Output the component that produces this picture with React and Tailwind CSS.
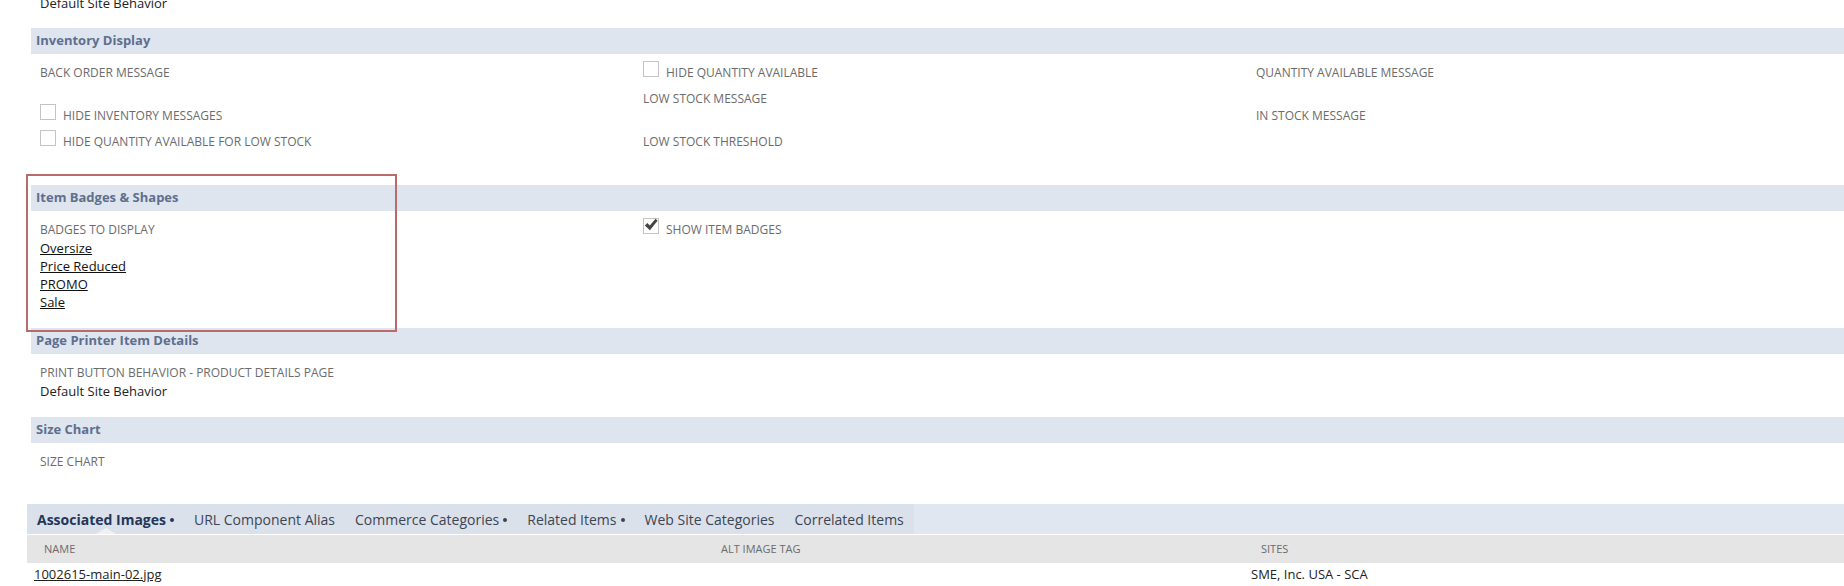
import React from 'react';

// Item record, Web Store subtab (lower part)

const Label = ({ children }) => (
  <div className="text-[12px] leading-[18px] text-[#6b6b6b] uppercase">{children}</div>
);

const TextField = ({ label, value }) => (
  <div className="pb-[7px]">
    <Label>{label}</Label>
    <div className="h-[18px] text-[13px] leading-[18px] text-[#222]">{value}</div>
  </div>
);

const CheckBox = ({ checked }) => (
  <span className="-mt-[3px] flex h-[16px] w-[16px] shrink-0 items-center justify-center border border-[#c4c4c4] bg-white">
    {checked && (
      <svg width="14" height="14" viewBox="0 0 14 14" className="-mt-[2px] -ml-[1px]">
        <path d="M0.8 7.4 L3.4 5 L5.8 7.6 L11.6 0.8 L13.6 2.8 L5.9 12.2 Z" fill="#454545" />
      </svg>
    )}
  </span>
);

const CheckField = ({ label, checked }) => (
  <div className="flex h-[26px] items-start">
    <CheckBox checked={checked} />
    <span className="ml-[7px] text-[12px] leading-[18px] text-[#6b6b6b] uppercase">{label}</span>
  </div>
);

const Section = ({ title, pb = 'pb-[8px]', children }) => (
  <div>
    <div className="ml-[31px] flex h-[26px] items-center bg-[#dfe5ef] pl-[5px] text-[13px] font-bold text-[#5e6f8d]">
      {title}
    </div>
    <div className={'ml-[31px] flex pt-[10px] pl-[9px] ' + pb}>{children}</div>
  </div>
);

const tabs = [
  { name: 'Associated Images', dot: true, active: true },
  { name: 'URL Component Alias' },
  { name: 'Commerce Categories', dot: true },
  { name: 'Related Items', dot: true },
  { name: 'Web Site Categories' },
  { name: 'Correlated Items' },
];

const badges = ['Oversize', 'Price Reduced', 'PROMO', 'Sale'];

export default function App() {
  return (
    <div className="relative h-[586px] w-[1844px] overflow-hidden bg-white" style={{ fontFamily: '"Open Sans", sans-serif' }}>
      {/* tail of the previous section */}
      <div className="-mt-[6px] pb-[16px] pl-[40px] text-[13px] leading-[18px] text-[#222]">Default Site Behavior</div>

      <Section title="Inventory Display" pb="pb-[9px]">
        <div className="w-[603px]">
          <TextField label="Back Order Message" />
          <CheckField label="Hide Inventory Messages" />
          <CheckField label="Hide Quantity Available for Low Stock" />
        </div>
        <div className="w-[613px]">
          <CheckField label="Hide Quantity Available" />
          <TextField label="Low Stock Message" />
          <TextField label="Low Stock Threshold" />
        </div>
        <div className="flex-1">
          <TextField label="Quantity Available Message" />
          <TextField label="In Stock Message" />
        </div>
      </Section>

      <Section title="Item Badges & Shapes">
        <div className="w-[603px] pb-[9px]">
          <Label>Badges to Display</Label>
          {badges.map((b) => (
            <div key={b} className="text-[13px] leading-[18px] text-[#111]">
              <a className="underline">{b}</a>
            </div>
          ))}
        </div>
        <div className="w-[613px]">
          <CheckField label="Show Item Badges" checked />
        </div>
      </Section>

      <Section title="Page Printer Item Details" pb="pb-[10px]">
        <div className="w-[603px]">
          <TextField label="Print Button Behavior - Product Details Page" value="Default Site Behavior" />
        </div>
      </Section>

      <Section title="Size Chart">
        <div className="w-[603px]">
          <TextField label="Size Chart" />
        </div>
      </Section>

      {/* subtabs */}
      <div className="ml-[27px] flex h-[30px] bg-[#e1e7f0]">
        <div className="flex h-full bg-[#dbe1ea]">
          {tabs.map((t) => (
            <div
              key={t.name}
              className={
                'relative flex h-full items-center px-[10px] text-[14px] ' +
                (t.active ? 'font-bold text-[#23365a]' : 'text-[#3d4452]')
              }
            >
              {t.name}
              {t.dot && <span className="ml-[4px] mt-[2px] h-[4px] w-[4px] rounded-full bg-current" />}
              {t.active && (
                <span className="absolute bottom-0 left-[69px] h-0 w-0 border-x-[10px] border-b-[6px] border-x-transparent border-b-[#f1f1f1]" />
              )}
            </div>
          ))}
        </div>
      </div>

      <div className="ml-[27px] mt-[1px] flex h-[28px] items-center bg-[#e5e5e5] text-[11px] uppercase text-[#6b6b6b]">
        <div className="w-[694px] pl-[17px]">Name</div>
        <div className="w-[540px]">Alt Image Tag</div>
        <div className="flex-1">Sites</div>
      </div>
      <div className="ml-[27px] flex h-[23px] items-center text-[13px] text-[#222]">
        <div className="w-[1224px] pl-[7px]">
          <a className="underline">1002615-main-02.jpg</a>
        </div>
        <div className="flex-1">SME, Inc. USA - SCA</div>
      </div>

      {/* highlight box over the badges section */}
      <div className="absolute left-[26px] top-[174px] h-[158px] w-[371px] border-2 border-[#b86b6b]" />
    </div>
  );
}
